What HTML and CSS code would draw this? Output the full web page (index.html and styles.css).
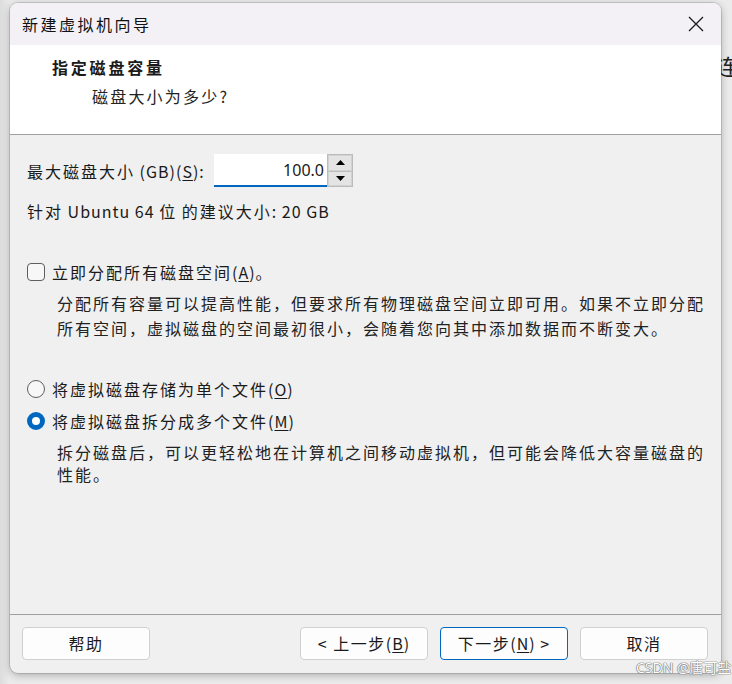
FILE: index.html
```html
<!DOCTYPE html>
<html lang="zh-CN">
<head>
<meta charset="utf-8">
<link rel="stylesheet" href="styles.css">
</head>
<body>
<div class="backdrop-peek">连</div>
<div class="dialog">
  <div class="titlebar">
    <span class="title">新建虚拟机向导</span>
    <svg class="close" width="16" height="16" viewBox="0 0 16 16"><path d="M1 1 L15 15 M15 1 L1 15" stroke="#1a1a1a" stroke-width="1.3" fill="none"/></svg>
  </div>
  <div class="header">
    <div class="h-title">指定磁盘容量</div>
    <div class="h-sub">磁盘大小为多少<span class="lat">?</span></div>
  </div>
  <div class="content">
    <div class="size-row">
      <span class="label">最大磁盘大小<span class="lat"> (GB)(<u>S</u>):</span></span>
      <div class="spin">
        <div class="spin-input">100.0</div>
        <div class="spin-btns">
          <div class="spin-btn"><svg width="9" height="5" viewBox="0 0 9 5"><path d="M0 5 L4.5 0 L9 5Z" fill="#000"/></svg></div>
          <div class="spin-btn"><svg width="9" height="5" viewBox="0 0 9 5"><path d="M0 0 L4.5 5 L9 0Z" fill="#000"/></svg></div>
        </div>
      </div>
    </div>
    <div class="recommend">针对<span class="lat"> Ubuntu 64 </span>位<span class="lat"> </span>的建议大小<span class="lat">: 20 GB</span></div>

    <div class="option check-opt">
      <span class="checkbox"></span>
      <span>立即分配所有磁盘空间<span class="lat">(<u>A</u>)</span>。</span>
    </div>
    <p class="desc">分配所有容量可以提高性能，但要求所有物理磁盘空间立即可用。如果不立即分配所有空间，虚拟磁盘的空间最初很小，会随着您向其中添加数据而不断变大。</p>

    <div class="option radio-first">
      <span class="radio"></span>
      <span>将虚拟磁盘存储为单个文件<span class="lat">(<u>O</u>)</span></span>
    </div>
    <div class="option radio-second">
      <span class="radio checked"></span>
      <span>将虚拟磁盘拆分成多个文件<span class="lat">(<u>M</u>)</span></span>
    </div>
    <p class="desc desc2">拆分磁盘后，可以更轻松地在计算机之间移动虚拟机，但可能会降低大容量磁盘的性能。</p>
  </div>
  <div class="footer">
    <button class="btn">帮助</button>
    <div class="spacer"></div>
    <button class="btn">&lt; 上一步<span class="lat">(<u>B</u>)</span></button>
    <button class="btn primary">下一步<span class="lat">(<u>N</u>) &gt;</span></button>
    <button class="btn">取消</button>
  </div>
</div>
<div class="watermark">CSDN @唐可盐</div>
</body>
</html>
```

FILE: styles.css
```css
* { box-sizing: border-box; }
html, body {
  margin: 0;
  padding: 0;
  width: 732px;
  height: 684px;
  overflow: hidden;
}
body {
  background: linear-gradient(to right, #dcdcdc 0px, #ebebeb 10px, #ebebeb 100%);
  font-family: "Noto Sans CJK SC", "Noto Sans", sans-serif;
  font-size: 16px;
  color: #1a1a1a;
  position: relative;
  padding: 3px 0 0 10px;
}
u { text-decoration: underline; text-underline-offset: 2px; }
.lat { letter-spacing: 1px; }

.backdrop-peek {
  position: absolute;
  left: 716px;
  top: 54px;
  font-size: 22px;
  color: #222;
  line-height: 1;
}

.dialog {
  position: relative;
  width: 711px;
  height: 670px;
  border-radius: 8px;
  background: #f0f0f0;
  box-shadow: 0 2px 8px rgba(0,0,0,0.28), 0 0 0 1px rgba(0,0,0,0.12);
  display: flex;
  flex-direction: column;
  overflow: hidden;
}

.titlebar {
  height: 42px;
  background: #f3f1f6;
  display: flex;
  align-items: center;
  justify-content: space-between;
  padding: 0 17px 0 12px;
  flex-shrink: 0;
}
.title { font-size: 16px; letter-spacing: 2.5px; color: #111; }
.close { display: block; }

.header {
  height: 90px;
  background: #ffffff;
  border-bottom: 1px solid #a0a0a0;
  padding: 9px 0 0 42px;
  flex-shrink: 0;
}
.h-title {
  font-weight: bold;
  font-size: 16px;
  letter-spacing: 2.8px;
  line-height: 26px;
}
.h-sub {
  font-size: 16px;
  letter-spacing: 2.2px;
  line-height: 26px;
  padding-left: 40px;
  margin-top: 3px;
  color: #222;
}

.content {
  flex: 1;
  padding: 20px 0 0 17px;
  letter-spacing: 2px;
}
.size-row {
  display: flex;
  align-items: center;
  height: 32px;
}
.label { width: 187px; }
.spin {
  display: flex;
  align-items: stretch;
  height: 33px;
  margin-top: -1px;
}
.spin-input {
  width: 113px;
  height: 33px;
  background: #ffffff;
  border-bottom: 2px solid #0067c0;
  text-align: right;
  padding: 3px 3px 0 0;
  font-family: "Noto Sans", sans-serif;
  font-size: 16px;
  letter-spacing: 0;
  line-height: 26px;
}
.spin-btns {
  width: 26px;
  display: flex;
  flex-direction: column;
  border: 1px solid #bcbcbc;
  background: #e7e7e7;
}
.spin-btn {
  flex: 1;
  display: flex;
  align-items: center;
  justify-content: center;
  border: 1px solid #d2d2d2;
  background: #e4e4e4;
}
.spin-btn + .spin-btn { border-top: 1px solid #bcbcbc; }

.recommend {
  margin-top: 11px;
  line-height: 26px;
}

.option {
  display: flex;
  align-items: center;
  height: 26px;
  line-height: 26px;
}
.check-opt { margin-top: 35px; }
.checkbox {
  width: 18px;
  height: 18px;
  border: 1px solid #5e5e5e;
  border-radius: 4px;
  background: #f7f7f7;
  margin-right: 7px;
  flex-shrink: 0;
}
.radio {
  width: 18px;
  height: 18px;
  border: 1px solid #5e5e5e;
  border-radius: 50%;
  background: #f7f7f7;
  margin-right: 7px;
  flex-shrink: 0;
}
.radio.checked {
  border: 5px solid #0067c0;
  background: #ffffff;
}
.desc {
  margin: 6px 0 0 30px;
  width: 660px;
  line-height: 25px;
  color: #222;
}
.radio-first { margin-top: 35px; }
.radio-second { margin-top: 6px; }
.desc2 { margin-top: 7px; line-height: 22px; }

.footer {
  height: 59px;
  border-top: 1px solid #a0a0a0;
  display: flex;
  align-items: center;
  gap: 12px;
  padding: 0 13px 2px 12px;
  flex-shrink: 0;
}
.spacer { flex: 1; }
.btn {
  width: 128px;
  height: 33px;
  background: #fdfdfd;
  border: 1px solid #d0d0d0;
  border-radius: 4px;
  font-family: "Noto Sans CJK SC", "Noto Sans", sans-serif;
  font-size: 16px;
  letter-spacing: 1.5px;
  color: #1a1a1a;
  padding: 0;
}
.btn.primary { border-color: #0067c0; }

.watermark {
  position: absolute;
  left: 636px;
  top: 657px;
  font-size: 14px;
  color: #ffffff;
  font-family: "Noto Sans", "Noto Sans CJK SC", sans-serif;
  text-shadow: 0 0 1px #666, 0 0 1px #666, 0 0 1px #666;
}
```
